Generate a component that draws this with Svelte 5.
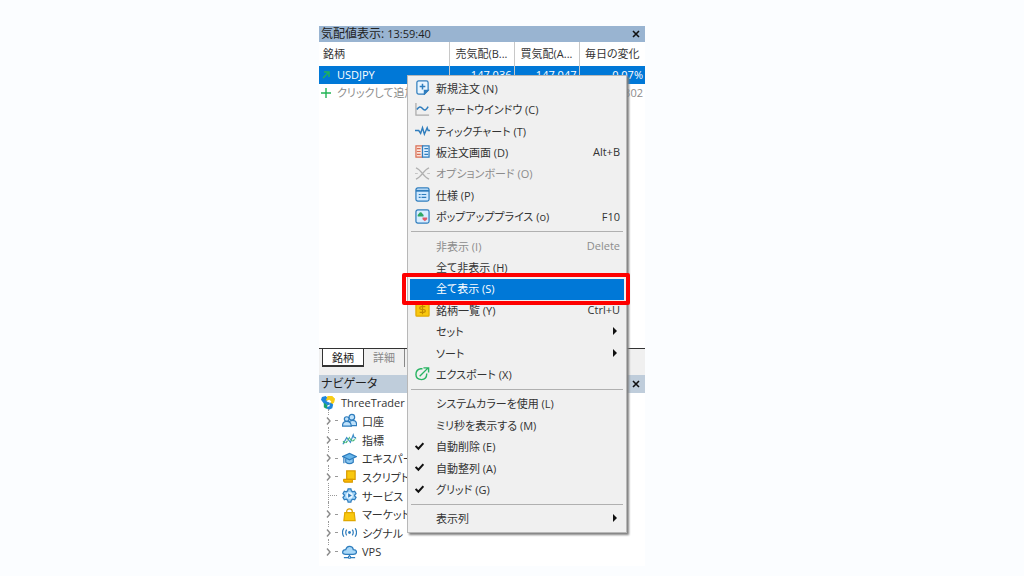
<script lang="ts">
  type Item = {
    label: string
    icon?: string
    keys?: string
    disabled?: boolean
    checked?: boolean
    submenu?: boolean
  }

  const groups: Item[][] = [
    [
      { label: '新規注文 (N)', icon: 'order' },
      { label: 'チャートウインドウ (C)', icon: 'chart' },
      { label: 'ティックチャート (T)', icon: 'tick' },
      { label: '板注文画面 (D)', icon: 'depth', keys: 'Alt+B' },
      { label: 'オプションボード (O)', icon: 'options', disabled: true },
      { label: '仕様 (P)', icon: 'spec' },
      { label: 'ポップアッププライス (o)', icon: 'popup', keys: 'F10' },
    ],
    [
      { label: '非表示 (I)', keys: 'Delete', disabled: true },
      { label: '全て非表示 (H)' },
      { label: '全て表示 (S)' },
      { label: '銘柄一覧 (Y)', icon: 'symbols', keys: 'Ctrl+U' },
      { label: 'セット', submenu: true },
      { label: 'ソート', submenu: true },
      { label: 'エクスポート (X)', icon: 'export' },
    ],
    [
      { label: 'システムカラーを使用 (L)' },
      { label: 'ミリ秒を表示する (M)' },
      { label: '自動削除 (E)', checked: true },
      { label: '自動整列 (A)', checked: true },
      { label: 'グリッド (G)', checked: true },
    ],
    [{ label: '表示列', submenu: true }],
  ]

  const tree = [
    { label: '口座', icon: 'accounts' },
    { label: '指標', icon: 'indicators' },
    { label: 'エキスパート', icon: 'experts' },
    { label: 'スクリプト', icon: 'scripts' },
    { label: 'サービス', icon: 'services', leaf: true },
    { label: 'マーケット', icon: 'market' },
    { label: 'シグナル', icon: 'signals' },
    { label: 'VPS', icon: 'vps' },
  ]

  let active = $state('全て表示 (S)')
</script>

{#snippet icon(name: string)}
  <svg class="icon" viewBox="0 0 16 16" fill="none" stroke="#2f7dbd" stroke-width="1.3" aria-hidden="true">
    {#if name === 'order'}
      <path d="M4 1h8q2 0 2 2v8l-4 4H4q-2 0-2-2V3q0-2 2-2z" fill="#e8f5ff" />
      <path d="M8 4v6M5 7h6" stroke-width="1.6" />
      <path d="M14 11h-4v4z" fill="#2f7dbd" />
    {:else if name === 'chart'}
      <path d="M1 1v13h14" stroke="#aaa" />
      <path d="M2 8q3-5 6-1t6-2" stroke-width="1.6" />
    {:else if name === 'tick'}
      <path d="M0 8h4l2 3 2-6 2 7 3-7 1 3h2" stroke-width="1.5" />
    {:else if name === 'depth'}
      <path d="M1 2h7v12H1z" fill="#fbe3da" stroke="#d96f55" />
      <path d="M8 2h7v12H8z" fill="#dceeff" />
      <path d="M2 5h4M2 8h4M2 11h4" stroke="#d96f55" />
      <path d="M10 5h4M10 8h4M10 11h4" />
    {:else if name === 'options'}
      <path d="M1 2q3 1 7 6t7 6M1 14q3-1 7-6t7-6" stroke="#b0b0b0" />
      <path d="M0 8h3M13 8h3" stroke="#c4c4c4" />
    {:else if name === 'spec'}
      <rect x="1" y="1" width="14" height="14" rx="2" fill="#cfe9ff" />
      <path d="M1 4h14" stroke-width="2" />
      <path d="M4 8h2M7 8h5M4 11h2M7 11h5" />
    {:else if name === 'popup'}
      <rect x="1" y="1" width="14" height="14" rx="2" fill="#d8edff" />
      <path d="M3 8q-1-2 1-3 2-3 4 0 2 1 1 3z" fill="#2fa865" stroke="none" />
      <path d="M8 9h5v2l-2.500 2L8 11z" fill="#e05b68" stroke="none" />
    {:else if name === 'symbols'}
      <rect x="1" y="1" width="14" height="14" rx="1" fill="#f9c80e" stroke="#e0a800" />
      <path d="M11 5H7q-2 0-2 1.500T7 8h2q2 0 2 1.500T9 11H5M8 3v10" stroke="#c28a00" />
    {:else if name === 'export'}
      <path d="M8 3H6Q1 4 1 9t6 5.500q5.500-.5 5.500-6V8" stroke="#28b463" stroke-width="1.500" />
      <path d="M5 11l9-9M9 2h5.500v5" stroke="#28b463" stroke-width="1.500" />
    {:else if name === 'accounts'}
      <circle cx="10.500" cy="4.500" r="3" fill="#bfe2fb" />
      <path d="M8 9q3-2 6-.5 2 1.500 1.500 5H9z" fill="#bfe2fb" />
      <circle cx="5" cy="6.500" r="2.500" fill="#bfe2fb" />
      <path d="M.5 14q0-5 4.500-5t5 5z" fill="#bfe2fb" />
    {:else if name === 'indicators'}
      <path d="M1 13l4-7 4 5 3-8 1 3h2" stroke="#3f8fc9" />
      <path d="M1 10l3 2 4-6 3 4 4-3" stroke="#45b87a" stroke-dasharray="3 1" />
    {:else if name === 'experts'}
      <path d="M4 8v4q4 3 8 0V8" fill="#8cc8f2" />
      <path d="M.5 6L8 2.500 15.500 6 8 9.500z" fill="#66b5ea" />
      <path d="M2 7v6" />
    {:else if name === 'scripts'}
      <path d="M5 2h9v9H5z" fill="#f9c80e" stroke="#d99b00" />
      <path d="M2 11h9v3H3q-2-1-1-3z" fill="#ffb900" stroke="#d99b00" />
    {:else if name === 'services'}
      <path d="M6.500 1h3l.5 2 1.500 1 2-.5 1.500 2.500-1.500 1.500v1L15 10l-1.500 2.500-2-.5-1.500 1-.5 2h-3L6 13l-1.500-1-2 .5L1 10l1.500-1.500v-1L1 6l1.500-2.500 2 .5L6 3z" fill="#9ed2f7" />
      <circle cx="8" cy="8" r="3.500" fill="#e8f5ff" stroke="none" />
      <path d="M6.500 5.500l4 2.500-4 2.500z" fill="#2f7dbd" stroke="none" />
    {:else if name === 'market'}
      <path d="M5 6V5q0-3 3-3t3 3v1" stroke="#d99b00" />
      <path d="M3 6h10l1 8.500H2z" fill="#f9c80e" stroke="#e0a800" />
    {:else if name === 'signals'}
      <circle cx="8" cy="8" r="1.500" fill="#2f7dbd" stroke="none" />
      <path d="M5 5q-2 3 0 6M11 5q2 3 0 6M2 3.500q-3 4.500 0 9M14 3.500q3 4.500 0 9" />
    {:else if name === 'vps'}
      <path d="M4 11Q.5 11 .7 8.500T4 6q1-4 4.500-3.500T12 6q3.500 0 3.500 2.500T12 11z" fill="#a9d8f8" />
      <path d="M8 11v3M2 14.500h12" />
      <circle cx="8" cy="14" r="1.200" fill="#fff" />
    {:else if name === 'brand'}
      <path d="M1 2l4-1 3 3-2 3 3 1 1 2-3 1-4-2-3-4z" fill="#1f86dc" stroke="none" />
      <path d="M7 1h5l3 3-1 4-3 3-2-1 2-3-2-2-4 1z" fill="#f7cd16" stroke="none" />
      <path d="M10 8l3 2-1 4-4 2-3-3 4-1z" fill="#1f86dc" stroke="none" />
      <path d="M3 8l4 3-1 4-3-2z" fill="#1aa36f" stroke="none" />
    {/if}
  </svg>
{/snippet}

{#snippet close()}
  <button class="close" aria-label="閉じる">
    <svg viewBox="0 0 8 8" aria-hidden="true"><path d="M1 1l6 6M7 1L1 7" stroke="#111" stroke-width="1.6" /></svg>
  </button>
{/snippet}

<main class="page">
  <div class="terminal">
    <section class="watch">
      <header class="title">
        <h2>気配値表示: <span class="time">13:59:40</span></h2>
        {@render close()}
      </header>
      <table>
        <colgroup><col /><col class="price" /><col class="price" /><col class="change" /></colgroup>
        <thead>
          <tr><th>銘柄</th><th>売気配(B...</th><th>買気配(A...</th><th>毎日の変化</th></tr>
        </thead>
        <tbody>
          <tr class="selected">
            <td>
              <div class="symbol">
                <svg class="mark" viewBox="0 0 10 10" fill="none" stroke="#22b455" stroke-width="1.4" aria-hidden="true"><path d="M2 8l5-5M3 2h5v5" /></svg>
                USDJPY
              </div>
            </td>
            <td>147.036</td>
            <td>147.047</td>
            <td>0.07%</td>
          </tr>
          <tr class="add">
            <td colspan="3">
              <div class="symbol">
                <svg class="mark" viewBox="0 0 10 10" stroke="#22b455" stroke-width="1.4" aria-hidden="true"><path d="M5 0v10M0 5h10" /></svg>
                クリックして追加
              </div>
            </td>
            <td>1 / 302</td>
          </tr>
        </tbody>
      </table>
    </section>

    <div class="tabs" role="tablist">
      <button class="tab current" role="tab" aria-selected="true">銘柄</button>
      <button class="tab" role="tab" aria-selected="false">詳細</button>
    </div>

    <section class="navigator">
      <header class="title inactive">
        <h2>ナビゲータ</h2>
        {@render close()}
      </header>
      <ul class="tree">
        <li class="root">{@render icon('brand')}<span>ThreeTrader MT5</span></li>
        {#each tree as node}
          <li>
            <span class="branch" class:leaf={node.leaf}>
              {#if !node.leaf}
                <svg viewBox="0 0 5 8" fill="none" stroke="#8a8a8a" stroke-width="1.4" aria-hidden="true"><path d="M1 0.500l3 3.500-3 3.500" /></svg>
              {/if}
            </span>
            {@render icon(node.icon)}
            <span>{node.label}</span>
          </li>
        {/each}
      </ul>
    </section>

    <div class="menu" role="menu">
      {#each groups as group, i}
        {#if i > 0}
          <div class="separator" role="separator"></div>
        {/if}
        {#each group as item}
          <button
            class="item"
            class:active={item.label === active}
            role="menuitem"
            disabled={item.disabled}
            onclick={() => (active = item.label)}
          >
            <span class="slot">
              {#if item.icon}
                {@render icon(item.icon)}
              {:else if item.checked}
                <svg class="check" viewBox="0 0 8 8" fill="none" stroke="#111" stroke-width="1.8" aria-hidden="true"><path d="M.5 3.500L3 6l4.500-5" /></svg>
              {/if}
            </span>
            <span class="label">{item.label}</span>
            {#if item.keys}
              <span class="keys">{item.keys}</span>
            {/if}
            {#if item.submenu}
              <svg class="arrow" viewBox="0 0 4 8" aria-hidden="true"><path d="M0 0l4 4-4 4z" fill="#111" /></svg>
            {/if}
          </button>
        {/each}
      {/each}
    </div>
  </div>
</main>

<style>
  :global(body) {
    background: #fbfdff;
  }

  .page {
    box-sizing: border-box;
    min-height: 100vh;
    padding: 26px 0 10px;
    display: grid;
    grid-template-columns: 319fr 326fr 379fr;
    font-family: 'Open Sans', 'Noto Sans CJK JP', sans-serif;
    font-feature-settings: 'palt';
    font-size: 11px;
    color: #333;
  }

  button {
    font: inherit;
    font-feature-settings: inherit;
    color: inherit;
    border: 0;
    padding: 0;
    background: none;
  }

  svg {
    display: block;
    flex-shrink: 0;
  }

  .icon {
    width: 15px;
    height: 15px;
  }

  .terminal {
    grid-column: 2;
    position: relative;
    display: flex;
    flex-direction: column;
    background: #fff;
    white-space: nowrap;
  }

  .watch {
    flex: 1;
  }

  .title {
    display: flex;
    align-items: center;
    justify-content: space-between;
    height: 16px;
    padding: 0 5px 0 2px;
    background: #99b4d1;
  }

  .title.inactive {
    height: 18px;
    background: #bfcddb;
  }

  h2 {
    margin: 0;
    font-size: 12px;
    line-height: 16px;
    font-weight: 400;
    color: #222;
  }

  .time {
    font-size: 11px;
  }

  .close svg {
    width: 8px;
    height: 8px;
  }

  table {
    width: 100%;
    table-layout: fixed;
    border-collapse: collapse;
  }

  .price {
    width: 65px;
  }

  .change {
    width: 66px;
  }

  th,
  td {
    padding: 0 2px;
    line-height: 18px;
    font-weight: 400;
    text-align: right;
  }

  th {
    height: 24px;
    padding: 0 4px;
    text-align: center;
  }

  th:first-child,
  td:first-child {
    text-align: left;
  }

  th + th,
  .selected td + td {
    border-left: 1px solid #c8c8c8;
  }

  .selected {
    background: #0078d7;
    color: #fff;
  }

  .add {
    color: #8c8c8c;
  }

  .symbol {
    display: flex;
    align-items: center;
    gap: 6px;
  }

  .mark {
    width: 10px;
    height: 10px;
  }

  .tabs {
    display: flex;
    align-items: flex-start;
    height: 26px;
    padding-left: 3px;
    border-top: 1px solid #333;
    background: #f0f0f0;
  }

  .tab {
    height: 18px;
    padding: 0 9px;
    line-height: 18px;
    color: #888;
    border-right: 1px solid #888;
  }

  .tab.current {
    background: #fff;
    color: #222;
    border: solid #333;
    border-width: 0 1px 2px;
  }

  .tree {
    height: 168px;
    margin: 0 0 5px;
    padding: 0;
    list-style: none;
    display: grid;
    grid-auto-rows: 1fr;
  }

  .tree li {
    display: flex;
    align-items: center;
    gap: 5px;
    min-height: 0;
    padding-left: 7px;
  }

  .tree .root {
    padding-left: 2px;
  }

  .branch {
    position: relative;
    align-self: stretch;
    display: flex;
    align-items: center;
    justify-content: flex-end;
    gap: 4px;
    width: 11px;
  }

  .branch svg {
    width: 5px;
    height: 8px;
  }

  .branch::before {
    content: '';
    position: absolute;
    top: -3px;
    left: 2px;
    height: 6px;
    border-left: 1px dotted #999;
  }

  .branch::after {
    content: '';
    width: 3px;
    border-top: 1px dotted #999;
  }

  .branch.leaf::before {
    height: 100%;
  }

  .branch.leaf::after {
    width: 9px;
  }

  .menu {
    position: absolute;
    z-index: 1;
    top: 49px;
    bottom: 33px;
    left: 27%;
    right: 18px;
    box-sizing: border-box;
    display: flex;
    flex-direction: column;
    padding: 2px;
    border: 1px solid #b8b8b8;
    background: #f0f0f0;
    box-shadow: 2px 2px 2px #808080;
  }

  .separator {
    height: 1px;
    margin: 3px 1px 4px;
    background: #b0b0b0;
  }

  .item {
    position: relative;
    flex: 1;
    min-height: 0;
    display: flex;
    align-items: center;
    padding: 0 4px 2px 5px;
    text-align: left;
  }

  .item:disabled {
    color: #8c8c8c;
  }

  .item.active {
    z-index: 1;
    background: #0078d7;
    color: #fff;
  }

  .item.active::after {
    content: '';
    position: absolute;
    inset: -6px -6px -5px -8px;
    border: 4px solid #fe0000;
    border-radius: 2px;
  }

  .slot {
    width: 21px;
  }

  .check {
    width: 9px;
    height: 9px;
  }

  .label {
    flex: 1;
  }

  .arrow {
    width: 4px;
    height: 8px;
    margin-right: 3px;
  }
</style>
